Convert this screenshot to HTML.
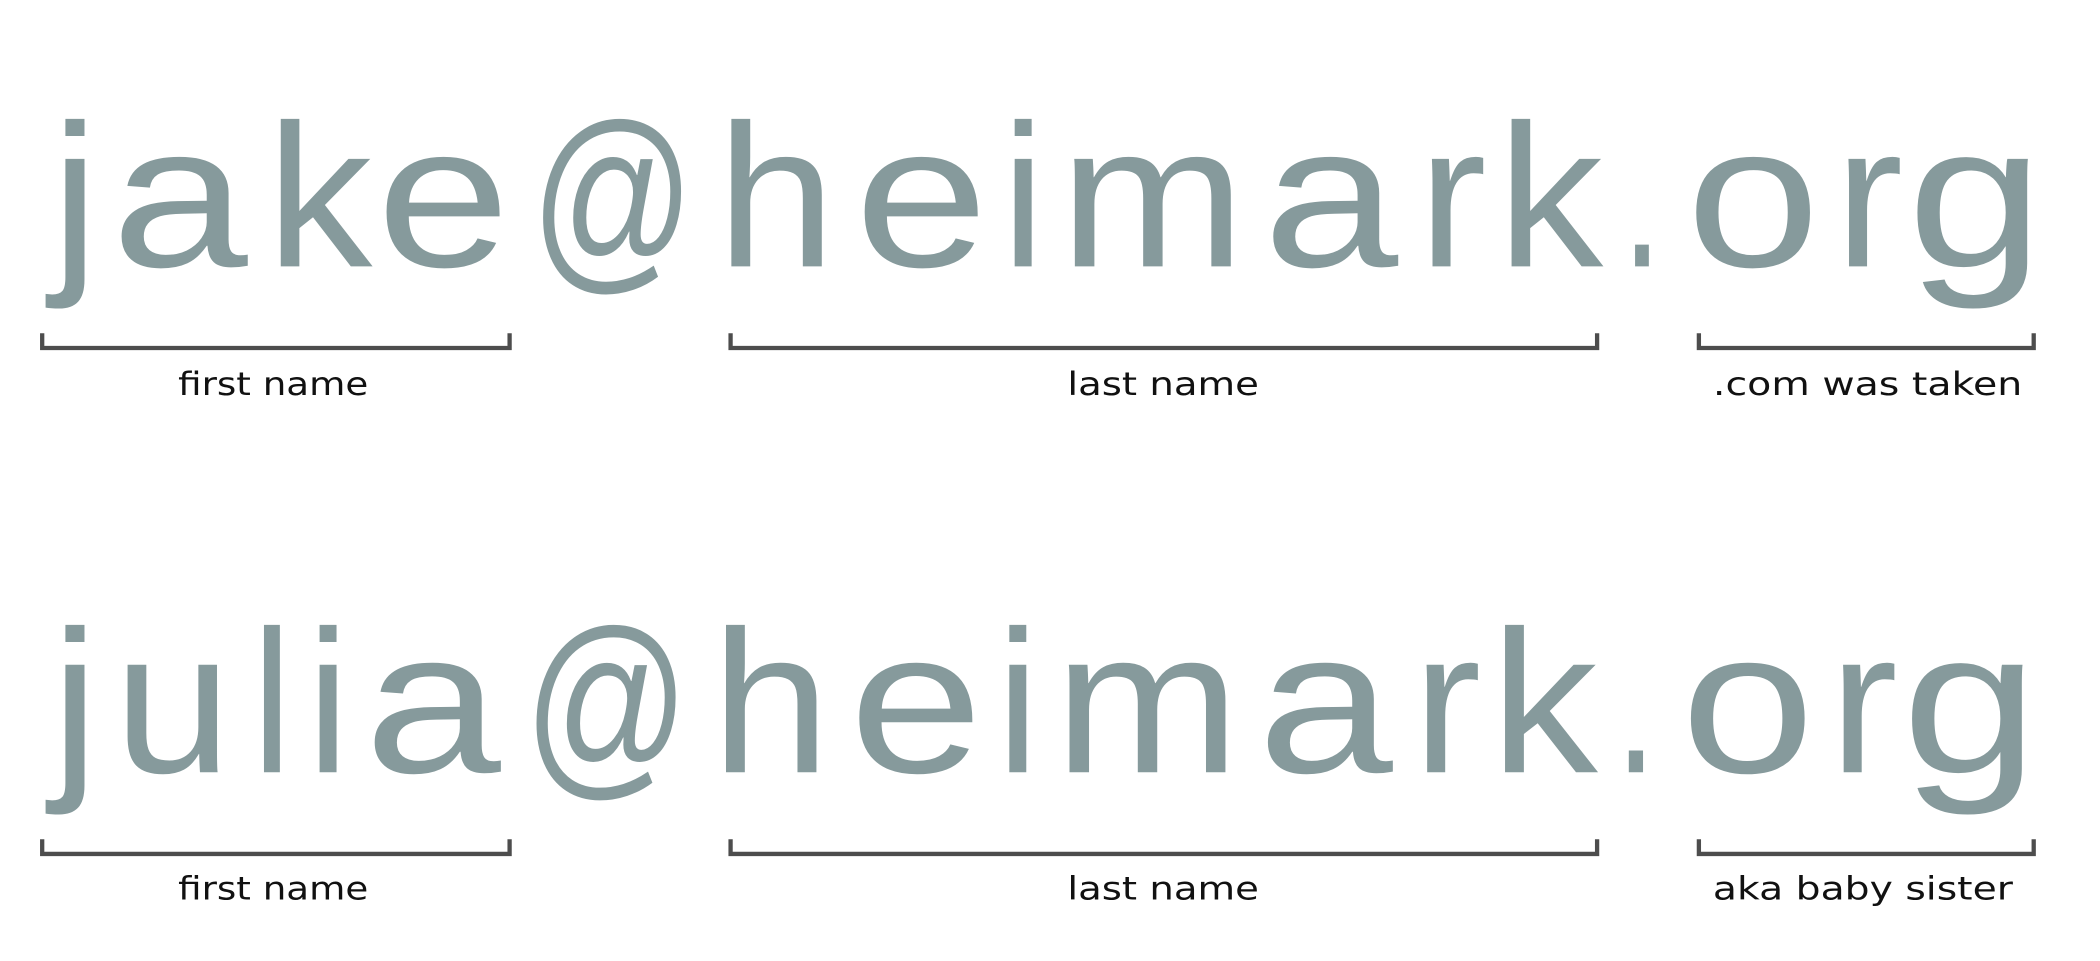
<!DOCTYPE html>
<html><head><meta charset="utf-8"><style>
html,body{margin:0;padding:0;background:#fff;width:2100px;height:961px;overflow:hidden}
svg{display:block}
.b{font-family:"Liberation Sans","DejaVu Sans",sans-serif;font-size:152px;fill:#869a9c}
.l{font-family:"DejaVu Sans","Liberation Sans",sans-serif;font-size:24px;fill:#111}
.k{fill:none;stroke:#4d4d4d;stroke-width:3.2}
</style></head><body>
<svg width="2100" height="961" viewBox="0 0 1568 718" preserveAspectRatio="none">
<g class="b" style="font-size:152px">
<text y="199" x="38" textLength="36" lengthAdjust="spacingAndGlyphs">j</text>
<text y="199" x="83" textLength="102" lengthAdjust="spacingAndGlyphs">a</text>
<text y="199" x="199" textLength="79" lengthAdjust="spacingAndGlyphs">k</text>
<text y="199" x="281" textLength="100" lengthAdjust="spacingAndGlyphs">e</text>
<text y="199" x="396" textLength="123" lengthAdjust="spacingAndGlyphs">@</text>
<text y="199" x="535" textLength="89" lengthAdjust="spacingAndGlyphs">h</text>
<text y="199" x="638" textLength="100" lengthAdjust="spacingAndGlyphs">e</text>
<text y="199" x="748" textLength="32" lengthAdjust="spacingAndGlyphs">i</text>
<text y="199" x="791" textLength="139" lengthAdjust="spacingAndGlyphs">m</text>
<text y="199" x="943" textLength="101" lengthAdjust="spacingAndGlyphs">a</text>
<text y="199" x="1059" textLength="51" lengthAdjust="spacingAndGlyphs">r</text>
<text y="199" x="1118" textLength="79" lengthAdjust="spacingAndGlyphs">k</text>
<text y="199" x="1211" textLength="30" lengthAdjust="spacingAndGlyphs">.</text>
<text y="199" x="1259" textLength="100" lengthAdjust="spacingAndGlyphs">o</text>
<text y="199" x="1370" textLength="51" lengthAdjust="spacingAndGlyphs">r</text>
<text y="199" x="1424" textLength="102" lengthAdjust="spacingAndGlyphs">g</text>

<text y="577" x="38" textLength="36" lengthAdjust="spacingAndGlyphs">j</text>
<text y="577" x="85" textLength="88" lengthAdjust="spacingAndGlyphs">u</text>
<text y="577" x="188" textLength="30" lengthAdjust="spacingAndGlyphs">l</text>
<text y="577" x="229" textLength="32" lengthAdjust="spacingAndGlyphs">i</text>
<text y="577" x="272" textLength="102" lengthAdjust="spacingAndGlyphs">a</text>
<text y="577" x="391" textLength="124" lengthAdjust="spacingAndGlyphs">@</text>
<text y="577" x="531" textLength="89" lengthAdjust="spacingAndGlyphs">h</text>
<text y="577" x="634" textLength="100" lengthAdjust="spacingAndGlyphs">e</text>
<text y="577" x="744" textLength="32" lengthAdjust="spacingAndGlyphs">i</text>
<text y="577" x="787" textLength="139" lengthAdjust="spacingAndGlyphs">m</text>
<text y="577" x="939" textLength="101" lengthAdjust="spacingAndGlyphs">a</text>
<text y="577" x="1055" textLength="51" lengthAdjust="spacingAndGlyphs">r</text>
<text y="577" x="1113" textLength="80" lengthAdjust="spacingAndGlyphs">k</text>
<text y="577" x="1206" textLength="31" lengthAdjust="spacingAndGlyphs">.</text>
<text y="577" x="1255" textLength="100" lengthAdjust="spacingAndGlyphs">o</text>
<text y="577" x="1366" textLength="51" lengthAdjust="spacingAndGlyphs">r</text>
<text y="577" x="1420" textLength="102" lengthAdjust="spacingAndGlyphs">g</text>
</g>
<path class="k" d="M31.5 249V260H380.5V249M545.5 249V260H1192.5V249M1268.5 249V260H1518.5V249"/>
<path class="k" d="M31.5 627V638H380.5V627M545.5 627V638H1192.5V627M1268.5 627V638H1518.5V627"/>
<text class="l" x="133" y="295" textLength="142" lengthAdjust="spacingAndGlyphs">first name</text>
<text class="l" x="797" y="295" textLength="143" lengthAdjust="spacingAndGlyphs">last name</text>
<text class="l" x="1279" y="295" textLength="231" lengthAdjust="spacingAndGlyphs">.com was taken</text>
<text class="l" x="133" y="672" textLength="142" lengthAdjust="spacingAndGlyphs">first name</text>
<text class="l" x="797" y="672" textLength="143" lengthAdjust="spacingAndGlyphs">last name</text>
<text class="l" x="1279" y="672" textLength="224" lengthAdjust="spacingAndGlyphs">aka baby sister</text>
</svg>
</body></html>
